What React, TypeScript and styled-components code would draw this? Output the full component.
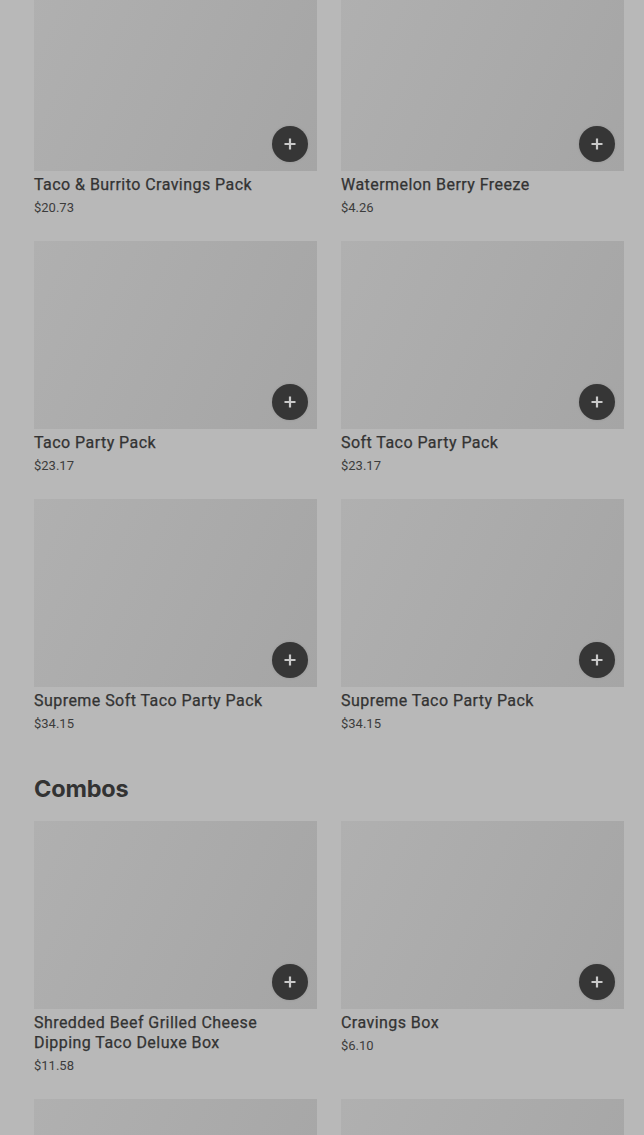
import React from "react";
import styled, { createGlobalStyle } from "styled-components";

const Global = createGlobalStyle`
  html, body {
    margin: 0;
    padding: 0;
    background: #b8b8b8;
    overflow: hidden;
  }
  body {
    font-family: Roboto, "Liberation Sans", sans-serif;
    color: #363636;
  }
`;

const Page = styled.div`
  width: 644px;
  height: 1135px;
  overflow: hidden;
  box-sizing: border-box;
  padding: 0 20px 0 34px;
  background: #b8b8b8;
`;

const Scroller = styled.div`
  margin-top: -17px;
  display: flex;
  flex-direction: column;
`;

const Grid = styled.div`
  display: grid;
  grid-template-columns: 283px 283px;
  column-gap: 24px;
  row-gap: 24px;
`;

const SectionTitle = styled.h2`
  margin: 40px 0 16px;
  font-family: Inter, "Liberation Sans", sans-serif;
  font-weight: 700;
  font-size: 23.5px;
  line-height: 32px;
  letter-spacing: -0.2px;
  color: #333;
`;

const Card = styled.div`
  display: flex;
  flex-direction: column;
`;

const Thumb = styled.div`
  position: relative;
  height: 188px;
  background: linear-gradient(115deg, #b0b0b0 0%, #aaaaaa 55%, #a5a5a5 100%);
`;

const AddButton = styled.button`
  position: absolute;
  right: 9px;
  bottom: 9px;
  width: 36px;
  height: 36px;
  border-radius: 50%;
  border: none;
  padding: 0;
  background: #363636;
  box-shadow: 0 0 3px rgba(0, 0, 0, 0.12);
  display: flex;
  align-items: center;
  justify-content: center;
`;

const Info = styled.div`
  padding-top: 4px;
  display: flex;
  flex-direction: column;
  gap: 3px;
`;

const Name = styled.div`
  font-size: 16px;
  line-height: 20px;
  font-weight: 400;
  letter-spacing: 0.45px;
  color: #333;
  -webkit-text-stroke: 0.25px #333;
`;

const Price = styled.div`
  font-size: 13px;
  line-height: 19px;
  font-weight: 400;
  color: #3c3c3c;
`;

const Plus = () => (
  <svg width="14" height="14" viewBox="0 0 14 14">
    <path d="M7 1.5v11M1.5 7h11" stroke="#c9c9c9" strokeWidth="2.2" strokeLinecap="butt" />
  </svg>
);

type Item = { name: string; price?: string };

const ItemCard = ({ name, price }: Item) => (
  <Card>
    <Thumb>
      <AddButton aria-label={`Add ${name}`}>
        <Plus />
      </AddButton>
    </Thumb>
    <Info>
      <Name>{name}</Name>
      {price && <Price>{price}</Price>}
    </Info>
  </Card>
);

const packs: Item[] = [
  { name: "Taco & Burrito Cravings Pack", price: "$20.73" },
  { name: "Watermelon Berry Freeze", price: "$4.26" },
  { name: "Taco Party Pack", price: "$23.17" },
  { name: "Soft Taco Party Pack", price: "$23.17" },
  { name: "Supreme Soft Taco Party Pack", price: "$34.15" },
  { name: "Supreme Taco Party Pack", price: "$34.15" },
];

const combos: Item[] = [
  { name: "Shredded Beef Grilled Cheese Dipping Taco Deluxe Box", price: "$11.58" },
  { name: "Cravings Box", price: "$6.10" },
  { name: "Chalupa Cravings Box", price: "$7.99" },
  { name: "Nachos Cravings Box", price: "$7.99" },
];

export default function App() {
  return (
    <Page>
      <Global />
      <Scroller>
        <Grid>
          {packs.map((p) => (
            <ItemCard key={p.name} {...p} />
          ))}
        </Grid>
        <SectionTitle>Combos</SectionTitle>
        <Grid>
          {combos.map((p) => (
            <ItemCard key={p.name} {...p} />
          ))}
        </Grid>
      </Scroller>
    </Page>
  );
}
